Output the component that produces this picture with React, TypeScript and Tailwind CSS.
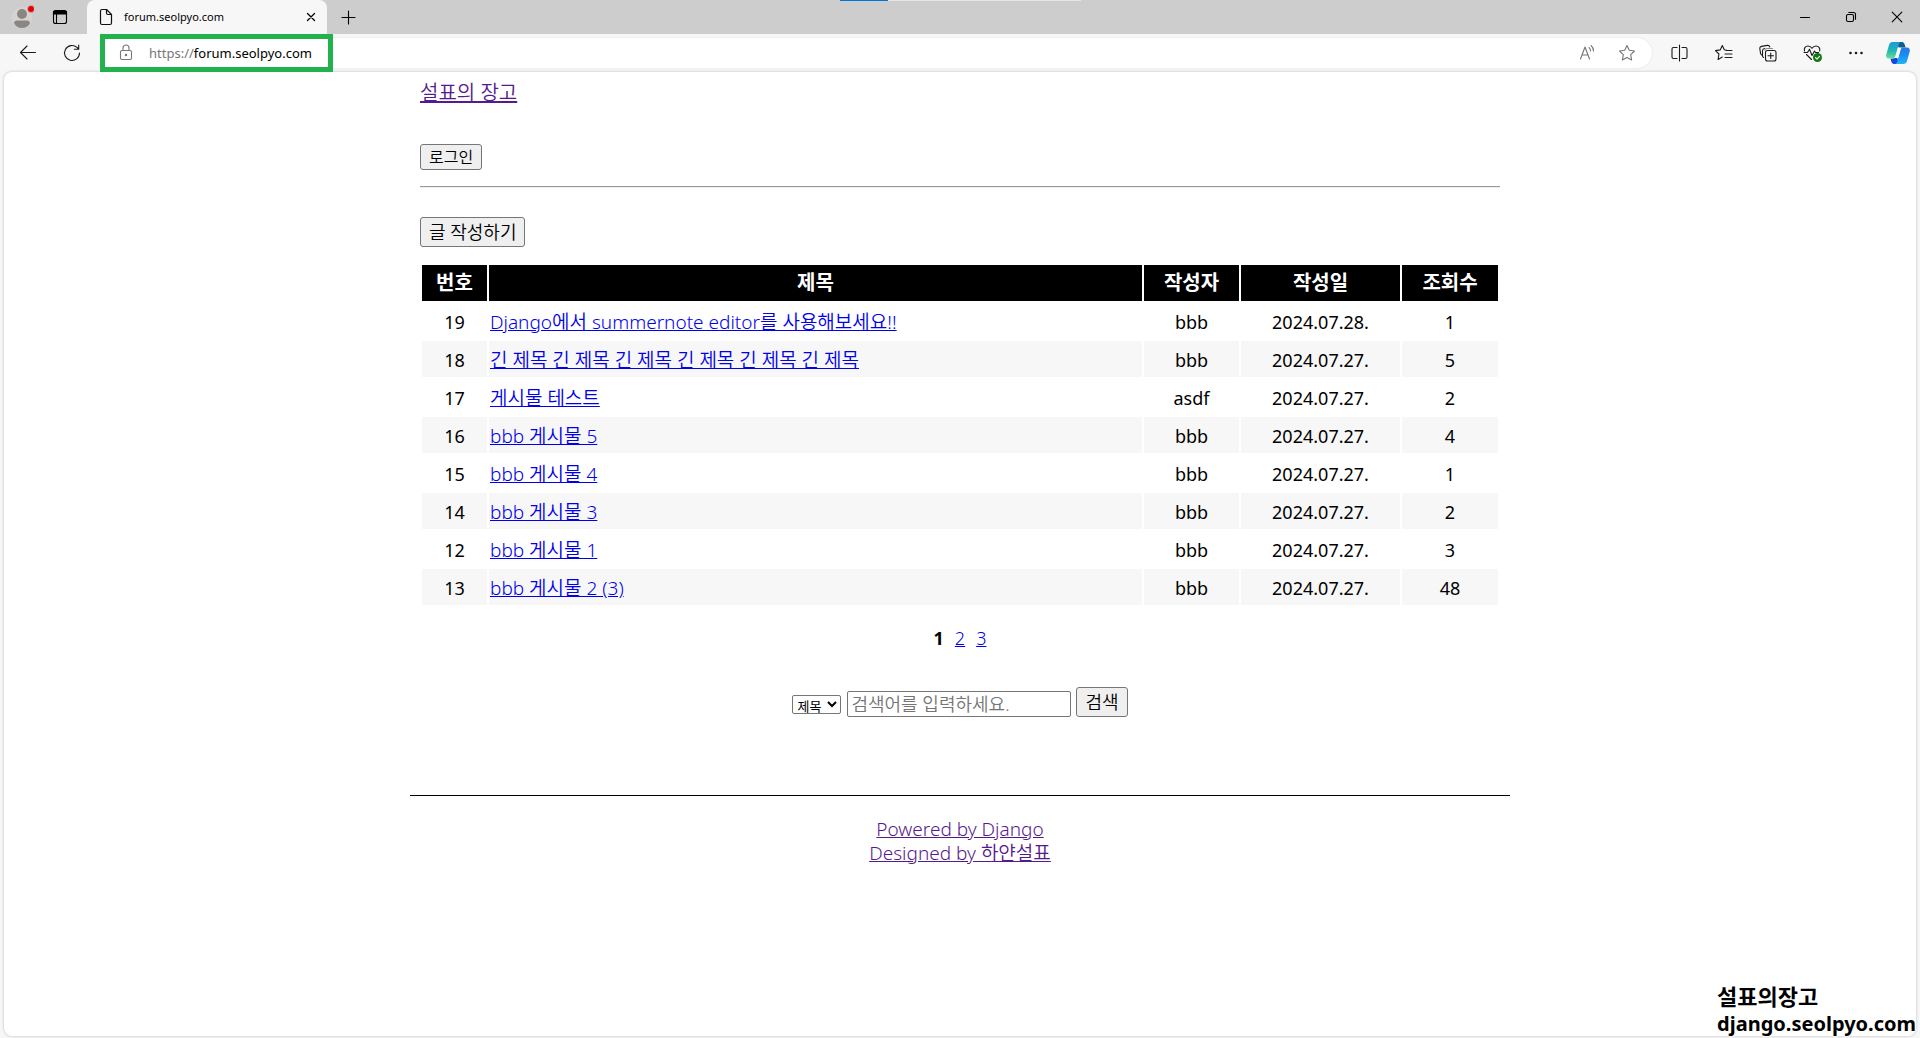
import type { ReactNode } from "react";

const posts = [
  { id: 19, title: "Django에서 summernote editor를 사용해보세요!!", author: "bbb", date: "2024.07.28.", views: 1 },
  { id: 18, title: "긴 제목 긴 제목 긴 제목 긴 제목 긴 제목 긴 제목", author: "bbb", date: "2024.07.27.", views: 5 },
  { id: 17, title: "게시물 테스트", author: "asdf", date: "2024.07.27.", views: 2 },
  { id: 16, title: "bbb 게시물 5", author: "bbb", date: "2024.07.27.", views: 4 },
  { id: 15, title: "bbb 게시물 4", author: "bbb", date: "2024.07.27.", views: 1 },
  { id: 14, title: "bbb 게시물 3", author: "bbb", date: "2024.07.27.", views: 2 },
  { id: 12, title: "bbb 게시물 1", author: "bbb", date: "2024.07.27.", views: 3 },
  { id: 13, title: "bbb 게시물 2 (3)", author: "bbb", date: "2024.07.27.", views: 48 },
];

function Icon({ size = 20, children }: { size?: number; children: ReactNode }) {
  return (
    <svg
      width={size}
      height={size}
      viewBox={`0 0 ${size} ${size}`}
      fill="none"
      stroke="currentColor"
      strokeWidth="1.1"
      strokeLinecap="round"
      strokeLinejoin="round"
      aria-hidden="true"
    >
      {children}
    </svg>
  );
}

function BarButton({ label, className, children }: { label: string; className: string; children: ReactNode }) {
  return (
    <button type="button" aria-label={label} className={`flex h-full shrink-0 items-center justify-center ${className}`}>
      {children}
    </button>
  );
}

function TitleBar() {
  return (
    <div className="relative flex h-[34px] bg-[#cdcdcd] pl-[3px] text-black">
      {/* snap layout strip */}
      <div className="absolute inset-x-0 top-0 flex h-px justify-center">
        <span className="w-12 bg-[#0078d4]" />
        <span className="w-[193px] bg-[#e5e5e5]" />
      </div>

      <BarButton label="프로필" className="w-[38px]">
        <svg width="24" height="26" viewBox="0 0 24 26" aria-hidden="true">
          <circle cx="12" cy="13.500" r="10.500" fill="#d6d3d0" />
          <circle cx="12" cy="10" r="5" fill="#8a8683" />
          <path d="M4 19c.5-1.800 1.500-2.500 3-2.500h10c1.500 0 2.500.7 3 2.500-1.500 3.200-4.500 5-8 5s-6.500-1.800-8-5z" fill="#8a8683" />
          <circle cx="21" cy="5" r="3.500" fill="#e60000" stroke="#cdcdcd" strokeWidth=".6" />
        </svg>
      </BarButton>
      <BarButton label="탭 작업 메뉴" className="w-[38px]">
        <Icon>
          <rect x="3.500" y="3.500" width="13" height="13" rx="2" />
          <path d="M3.500 4.500h13v2.500h-13z" fill="currentColor" />
          <path d="M6.500 7v9" />
        </Icon>
      </BarButton>

      {/* active tab */}
      <div className="ml-2 flex w-[240px] items-center rounded-t-lg bg-[#f7f7f7] pl-[10px] pr-[6px]">
        <svg width="18" height="18" viewBox="0 0 18 18" fill="none" stroke="#111" strokeWidth="1.200" strokeLinejoin="round" aria-hidden="true">
          <path d="M3.500 3c0-1 .5-1.500 1.500-1.500h4.500l5 5V15c0 1-.5 1.500-1.500 1.500H5c-1 0-1.500-.5-1.500-1.500z" />
          <path d="M9.500 1.500V5c0 1 .5 1.500 1.500 1.500h3.500" />
        </svg>
        <span className="ml-[9px] flex-1 text-[11px]">forum.seolpyo.com</span>
        <BarButton label="탭 닫기" className="w-5">
          <Icon size={10}>
            <path d="M1.500 1.500l7 7M8.500 1.500l-7 7" strokeWidth="1.300" />
          </Icon>
        </BarButton>
      </div>
      <BarButton label="새 탭" className="w-[42px]">
        <Icon size={16}>
          <path d="M8.500 2v13M2 8.500h13" />
        </Icon>
      </BarButton>

      <div className="ml-auto flex">
        <BarButton label="최소화" className="w-[46px]">
          <Icon size={12}>
            <path d="M1.500 6.500h9" />
          </Icon>
        </BarButton>
        <BarButton label="이전 크기로 복원" className="w-[46px]">
          <Icon size={12}>
            <rect x="1.500" y="3.500" width="7" height="7" rx="1.500" />
            <path d="M3.800 1.500h4.700c1.200 0 2 .8 2 2v4.700" />
          </Icon>
        </BarButton>
        <BarButton label="닫기" className="w-[46px]">
          <Icon size={12}>
            <path d="M1.200 1.200l9.600 9.600M10.800 1.200l-9.600 9.600" />
          </Icon>
        </BarButton>
      </div>
    </div>
  );
}

function Toolbar() {
  return (
    <div className="flex h-[38px] items-center bg-[#f7f7f7] pl-[6px] pr-[2px] text-[#1b1b1b]">
      <BarButton label="뒤로" className="w-11">
        <Icon>
          <path d="M17.500 9.500H2.500M9 3L2.500 9.500 9 16" />
        </Icon>
      </BarButton>
      <BarButton label="새로 고침" className="w-11">
        <Icon>
          <path d="M17.500 10A7.500 7.500 0 1 1 15 4.400L16.500 6M16.700 2v4.300h-4.300" />
        </Icon>
      </BarButton>

      {/* address bar */}
      <div className="relative ml-[6px] flex h-[30px] flex-1 items-center rounded-r-full bg-white pr-[5px] shadow-[0_0_2px_rgba(0,0,0,0.12)]">
        <div className="flex h-full flex-1 items-center pl-4 text-[#767676]">
          <Icon>
            <rect x="4.500" y="7.500" width="11" height="9" rx="1.500" />
            <path d="M7 7.500V5a3 3 0 0 1 6 0v2.500" />
            <circle cx="10" cy="12" r=".7" fill="currentColor" />
          </Icon>
          <span className="ml-[13px] pt-px text-[13px]">
            https://<span className="text-black">forum.seolpyo.com</span>
          </span>
        </div>
        <BarButton label="소리내어 읽기" className="w-10 text-[#767676]">
          <Icon>
            <path d="M3.500 16L8 4l4.500 12M5 12h6" />
            <path d="M12 4.500c1 .8 1.500 2 1.500 3.500M14 2.500c1.500 1.300 2.500 3.300 2.500 5.500" />
          </Icon>
        </BarButton>
        <BarButton label="즐겨찾기에 추가" className="w-10 text-[#767676]">
          <Icon>
            <path d="M10 2.500l2.300 4.800 5.200.7-3.800 3.700.9 5.300-4.600-2.500L5.400 17l.9-5.300L2.500 8l5.200-.7z" />
          </Icon>
        </BarButton>
        {/* highlight frame around the address */}
        <div className="pointer-events-none absolute -top-1 left-0 h-[38px] w-[233px] border-[5px] border-[#22b14c]" />
      </div>

      <div className="ml-[6px] flex h-full">
        <BarButton label="화면 분할" className="w-11">
          <Icon>
            <path d="M9.500 2v16M7 4.500H3.500c-1 0-1.500.5-1.500 1.500v8c0 1 .5 1.500 1.500 1.500H7M12 4.500h3.500c1 0 1.500.5 1.500 1.500v8c0 1-.5 1.500-1.500 1.500H12" />
          </Icon>
        </BarButton>
        <BarButton label="즐겨찾기" className="w-11">
          <Icon>
            <path d="M12.500 7.300L10.300 6.800 8.300 2.500 6.200 6.900l-4.700.7 3.400 3.400-.8 5.500 4.200-2.500M12 7.500h6M11 11h7M11 14.500h7" />
          </Icon>
        </BarButton>
        <BarButton label="컬렉션" className="w-11">
          <Icon>
            <path d="M4.500 12.500l-1-.6c-.6-.5-.9-1-1-1.700L1.800 5.500c-.1-1.100.5-1.900 1.600-2.100l6-1c1.200-.2 2 .3 2.400 1.600" />
            <path d="M7 7.200c.2-1 .9-1.700 2-1.700h5.500" opacity=".5" />
            <path d="M5.500 14.500c-.7-.3-1-.9-1-1.700V8c0-1.300.7-2.300 2-2.500" />
            <rect x="7.500" y="7.500" width="10.500" height="10.500" rx="2" />
            <path d="M12.750 10v5.500M10 12.750h5.500" />
          </Icon>
        </BarButton>
        <BarButton label="브라우저 필수 요소" className="w-11">
          <Icon>
            <path d="M2.500 8C1.700 5 3.500 3 6 3c1.600 0 3 .8 4 2.300C11 3.800 12.500 3 14 3c2.600 0 4.300 2.200 3.700 5M4.500 11.500l5 5" />
            <path d="M2 9.500h3.500l2-3.300L10 12.500 12.500 8l1 1.500h3" />
            <circle cx="15.500" cy="14.500" r="4.500" fill="#0f7b0f" stroke="none" />
            <path d="M13.500 14.600l1.500 1.400 2.600-2.700" stroke="#fff" />
          </Icon>
        </BarButton>
        <BarButton label="설정 및 기타" className="w-11">
          <Icon>
            <g fill="currentColor" stroke="none">
              <circle cx="4.500" cy="10" r="1.300" />
              <circle cx="10" cy="10" r="1.300" />
              <circle cx="15.500" cy="10" r="1.300" />
            </g>
          </Icon>
        </BarButton>
        <BarButton label="Copilot" className="w-10">
          <svg width="24" height="24" viewBox="0 0 24 24" aria-hidden="true">
            <defs>
              <linearGradient id="copilot-left" x1="0" y1="0" x2="0" y2="1">
                <stop offset="0" stopColor="#1b9ad8" />
                <stop offset=".55" stopColor="#22b8b5" />
                <stop offset="1" stopColor="#6be08c" />
              </linearGradient>
              <linearGradient id="copilot-right" x1="0" y1="0" x2="0" y2="1">
                <stop offset="0" stopColor="#2b74e8" />
                <stop offset=".5" stopColor="#1a8ff5" />
                <stop offset="1" stopColor="#1fb6f5" />
              </linearGradient>
            </defs>
            <path d="M10 1h6c1.500 0 2.200 1 2.700 2.500L19.500 6.500H17c-1.800 0-2.700.8-3.200 2.500z" fill="#0f5f8c" />
            <path d="M14 23H8c-1.500 0-2.200-1-2.700-2.500L4.500 17.500H7c1.800 0 2.700-.8 3.200-2.500z" fill="#1746d8" />
            <path d="M6.500 1H15c-1.300.3-1.800 1.200-2.300 2.800L9.500 15c-.5 1.800-1.500 2.500-3.200 2.500H3C1 17.500-.3 16 .3 13.500L3 4C3.600 2 4.700 1 6.500 1z" fill="url(#copilot-left)" />
            <path d="M17.500 23H9c1.300-.3 1.800-1.200 2.300-2.800L14.500 9c.5-1.800 1.500-2.500 3.200-2.500H21c2 0 3.300 1.500 2.700 4L21 20c-.6 2-1.700 3-3.500 3z" fill="url(#copilot-right)" />
            <path d="M12 6.500h4c-1 .5-1.400 1.400-1.700 2.500L12.200 17H8c1-.5 1.400-1.400 1.700-2.500z" fill="#fff" />
          </svg>
        </BarButton>
      </div>
    </div>
  );
}

function BoardTable() {
  return (
    <table className="w-full table-fixed border-separate border-spacing-[2px] text-center text-lg leading-6">
      <colgroup>
        <col className="w-[65px]" />
        <col />
        <col className="w-[95px]" />
        <col className="w-[159px]" />
        <col className="w-24" />
      </colgroup>
      <thead>
        <tr className="h-9 bg-black text-xl text-white">
          <th scope="col">번호</th>
          <th scope="col">제목</th>
          <th scope="col">작성자</th>
          <th scope="col">작성일</th>
          <th scope="col">조회수</th>
        </tr>
      </thead>
      <tbody>
        {posts.map((post) => (
          <tr key={post.id} className="h-9 even:bg-[#f7f7f7]">
            <td className="pt-px">{post.id}</td>
            <td className="px-px pt-[2px] text-left text-[19px] font-[350]">
              <a href={`#post-${post.id}`} className="text-[#0000ee] underline">
                {post.title}
              </a>
            </td>
            <td className="pt-px">{post.author}</td>
            <td className="pt-px">{post.date}</td>
            <td className="pt-px">{post.views}</td>
          </tr>
        ))}
      </tbody>
    </table>
  );
}

function SearchForm() {
  return (
    <form className="mt-[37px] flex items-center justify-center font-[350]" onSubmit={(e) => e.preventDefault()}>
      <select aria-label="검색 조건" className="mt-1 h-[19px] w-[49px] rounded-xs border border-[#767676] bg-white text-[13px] font-normal leading-4">
        <option>제목</option>
        <option>내용</option>
      </select>
      <input
        type="text"
        aria-label="검색어"
        placeholder="검색어를 입력하세요."
        className="ml-[6px] mt-1 h-[26px] w-56 rounded-xs border border-[#767676] px-[3px] text-lg leading-6 placeholder:text-[#757575]"
      />
      <button type="submit" className="ml-[5px] h-[30px] rounded-[3px] border border-[#767676] bg-[#efefef] px-2 text-lg leading-6">
        검색
      </button>
    </form>
  );
}

export default function App() {
  return (
    <div className="relative flex min-h-screen flex-col overflow-hidden bg-[#f7f7f7] font-['Noto_Sans','Noto_Sans_CJK_KR',sans-serif] text-black">
      <TitleBar />
      <Toolbar />

      <div className="mx-1 mb-[2px] flex-1 rounded-lg bg-white shadow-[0_0_3px_rgba(0,0,0,0.25)]">
        <div className="mx-auto max-w-[1100px]">
          <div className="px-[10px]">
            <header>
              <a href="#home" className="inline-block pt-[9px] text-xl font-[350] leading-6 text-[#551a8b] underline">
                설표의 장고
              </a>
              <div className="mt-[38px] flex">
                <button type="button" className="h-[26px] rounded-[3px] border border-[#767676] bg-[#efefef] px-2 text-base font-[350] leading-5">
                  로그인
                </button>
              </div>
              <hr className="mt-4 h-[2px] border-b border-t-[#9a9a9a] border-b-[#eeeeee]" />
            </header>

            <main>
              <div className="mb-4 mt-[29px] flex">
                <button type="button" className="h-[30px] rounded-[3px] border border-[#767676] bg-[#efefef] px-2 text-lg font-[350] leading-6">
                  글 작성하기
                </button>
              </div>
              <BoardTable />
              <nav aria-label="페이지" className="mt-[19px] flex justify-center gap-[11px] text-lg leading-6">
                <strong>1</strong>
                <a href="#page-2" className="font-[350] text-[#0000ee] underline">2</a>
                <a href="#page-3" className="font-[350] text-[#0000ee] underline">3</a>
              </nav>
              <SearchForm />
            </main>
          </div>

          <footer className="mt-[78px] flex flex-col items-center border-t border-black pt-[21px] text-[19px] font-[350] leading-6 text-[#551a8b]">
            <a href="#django" className="underline">Powered by Django</a>
            <a href="#designer" className="underline">Designed by 하얀설표</a>
          </footer>
        </div>
      </div>

      {/* watermark */}
      <div className="absolute bottom-0 right-1 text-xl font-bold leading-7 [text-shadow:0_0_3px_#fff,0_0_3px_#fff,0_0_3px_#fff]">
        <p className="text-[22px] leading-7">설표의장고</p>
        <p>django.seolpyo.com</p>
      </div>
    </div>
  );
}
